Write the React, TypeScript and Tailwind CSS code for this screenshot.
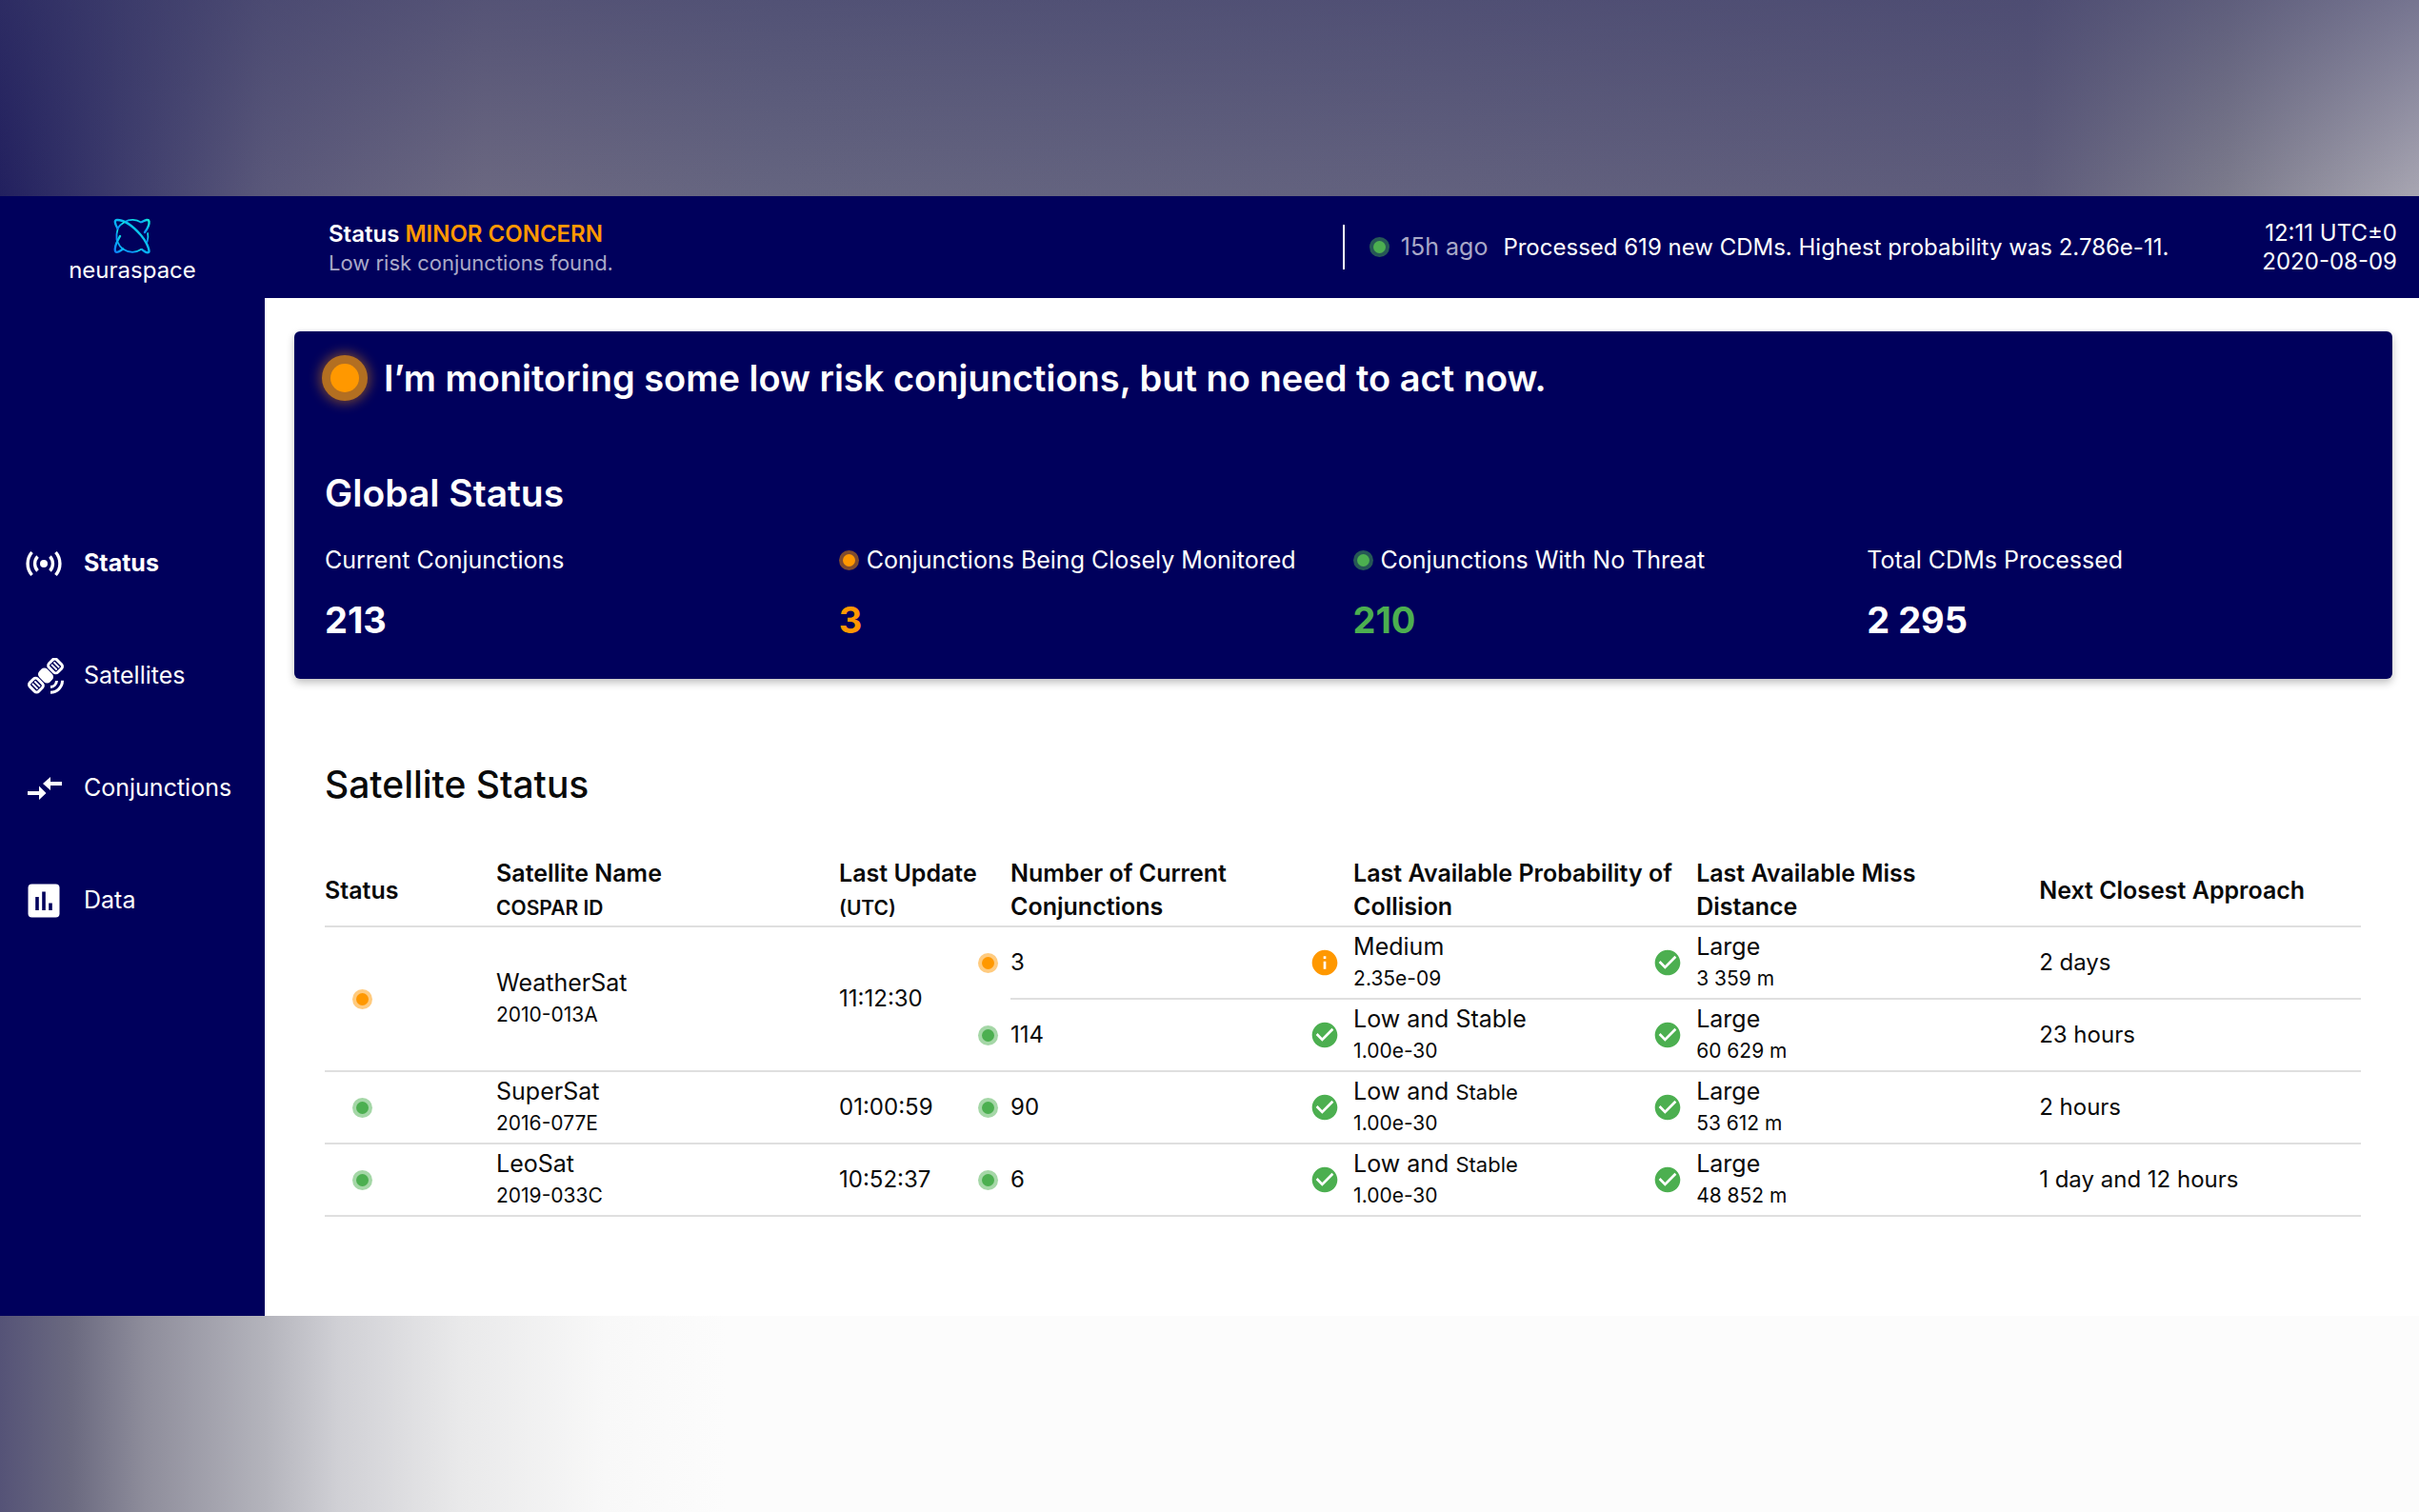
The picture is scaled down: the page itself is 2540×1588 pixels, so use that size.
import React from "react";

type Tone = "amber" | "green";

const DOT = {
  amber: "bg-[#ff9800] ring-[#ff9800]/50",
  green: "bg-[#4caf50] ring-[#4caf50]/50",
};

function Dot({ tone }: { tone: Tone }) {
  return <span className={"m-1 inline-block size-[13px] shrink-0 rounded-full ring-4 " + DOT[tone]} />;
}

function Check() {
  return (
    <svg viewBox="0 0 24 24" className="mr-3 size-8 shrink-0" aria-hidden="true">
      <path
        fill="#4caf50"
        d="M12 2C6.48 2 2 6.48 2 12s4.48 10 10 10 10-4.48 10-10S17.52 2 12 2zm-2 15-5-5 1.41-1.41L10 14.17l7.59-7.59L19 8l-9 9z"
      />
    </svg>
  );
}

function Info() {
  return (
    <svg viewBox="0 0 24 24" className="mr-3 size-8 shrink-0" aria-hidden="true">
      <path
        fill="#ff9800"
        d="M12 2C6.48 2 2 6.48 2 12s4.48 10 10 10 10-4.48 10-10S17.52 2 12 2zm1 15h-2v-6h2v6zm0-8h-2V7h2v2z"
      />
    </svg>
  );
}

function Logo() {
  return (
    <svg viewBox="0 0 40 38" className="h-[38px] w-10" fill="none" strokeWidth="2.4" strokeLinecap="round" aria-hidden="true">
      <defs>
        <linearGradient id="orbit" x1="0" y1="1" x2="1" y2="0">
          <stop offset="0" stopColor="#0f7bff" />
          <stop offset="0.5" stopColor="#08b4f5" />
          <stop offset="1" stopColor="#10f0d8" />
        </linearGradient>
      </defs>
      <g stroke="url(#orbit)">
        <path d="M12 4C17 1.200 24 1.200 29 4.500" strokeWidth="1.800" />
        <path d="M36 16C37 20 36.500 22 35.500 25" strokeWidth="1.800" />
        <path d="M29 33C23 37 16 36.500 10 32.500" strokeWidth="1.800" />
        <path d="M3.500 23C2.800 18 3.500 15 4.500 12" strokeWidth="1.800" />
        <path d="M4.500 11C1 5 1 2 4 2C12 2 22 10 29 18C35 25 39 35 37 36C35.500 37 32 35 30 33" />
        <path d="M30 4C34 2 37 1 37.500 3.500C38 7 36 11 33 15" />
        <path d="M7 19C3 26 0.500 33 2.500 35.500C4 37 8 34 10 32.500" />
        <path d="M4.500 11C6 8 8 6.500 11 4.800" strokeWidth="1.800" />
        <path d="M5 26C6 29 8 31 10 32.500" strokeWidth="1.800" />
      </g>
    </svg>
  );
}

function BroadcastIcon() {
  return (
    <svg viewBox="0 0 38 28" className="h-7 w-[38px]" fill="none" stroke="currentColor" strokeWidth="3.400" aria-hidden="true">
      <circle cx="19" cy="14" r="4" fill="currentColor" stroke="none" />
      <path d="M12.500 6.500a11 11 0 0 0 0 15M25.500 6.500a11 11 0 0 1 0 15M6.500 2a18.500 18.500 0 0 0 0 24M31.500 2a18.500 18.500 0 0 1 0 24" />
    </svg>
  );
}

function SatelliteIcon() {
  return (
    <svg viewBox="0 0 38 38" className="ml-0.5 size-[38px]" fill="none" stroke="currentColor" aria-hidden="true">
      <g transform="rotate(-45 19 18.500)">
        <rect x="-1" y="12" width="11.500" height="13" rx="3" strokeWidth="3" />
        <path d="M3 14.500v8M6.500 14.500v8" strokeWidth="1.800" />
        <rect x="13" y="10.500" width="12" height="16" rx="4.500" fill="currentColor" stroke="none" />
        <rect x="27.500" y="12" width="11.500" height="13" rx="3" strokeWidth="3" />
        <path d="M31.500 14.500v8M35 14.500v8" strokeWidth="1.800" />
      </g>
      <path d="M24 30.500a7 7 0 0 0 6.500-6.500M24 36.300a12.500 12.500 0 0 0 12.500-12.500" strokeWidth="3" />
    </svg>
  );
}

function ArrowsIcon() {
  return (
    <svg viewBox="0 0 36 24" className="ml-0.5 h-6 w-9" fill="currentColor" aria-hidden="true">
      <path d="M0 15h12v-5.500l7.500 7.500-7.500 7V19H0zM36 5H24V0l-8 7 8 7V9h12z" />
    </svg>
  );
}

function ChartIcon() {
  return (
    <svg viewBox="0 0 34 36" className="ml-0.5 h-9 w-[34px]" aria-hidden="true">
      <rect x="0.500" y="0.500" width="33" height="35" rx="4" fill="currentColor" />
      <path d="M10 14v14M17 8.500v19.500M24 20.500v7.500" stroke="#00005c" strokeWidth="3.600" />
    </svg>
  );
}

const NAV = [
  { label: "Status", icon: <BroadcastIcon />, active: true },
  { label: "Satellites", icon: <SatelliteIcon />, active: false },
  { label: "Conjunctions", icon: <ArrowsIcon />, active: false },
  { label: "Data", icon: <ChartIcon />, active: false },
];

const STATS: { label: string; value: string; tone?: Tone }[] = [
  { label: "Current Conjunctions", value: "213" },
  { label: "Conjunctions Being Closely Monitored", value: "3", tone: "amber" },
  { label: "Conjunctions With No Threat", value: "210", tone: "green" },
  { label: "Total CDMs Processed", value: "2 295" },
];

const VALUE = { amber: "text-[#ff9800]", green: "text-[#4caf50]" };

type Conj = { tone: Tone; count: string; risk: React.ReactNode; prob: string; miss: string; next: string };

const lowStable = <>Low and <span className="text-[22px]">Stable</span></>;

const SATS: { name: string; id: string; time: string; tone: Tone; rows: Conj[] }[] = [
  {
    name: "WeatherSat",
    id: "2010-013A",
    time: "11:12:30",
    tone: "amber",
    rows: [
      { tone: "amber", count: "3", risk: "Medium", prob: "2.35e-09", miss: "3 359 m", next: "2 days" },
      { tone: "green", count: "114", risk: "Low and Stable", prob: "1.00e-30", miss: "60 629 m", next: "23 hours" },
    ],
  },
  {
    name: "SuperSat",
    id: "2016-077E",
    time: "01:00:59",
    tone: "green",
    rows: [{ tone: "green", count: "90", risk: lowStable, prob: "1.00e-30", miss: "53 612 m", next: "2 hours" }],
  },
  {
    name: "LeoSat",
    id: "2019-033C",
    time: "10:52:37",
    tone: "green",
    rows: [{ tone: "green", count: "6", risk: lowStable, prob: "1.00e-30", miss: "48 852 m", next: "1 day and 12 hours" }],
  },
];

function TwoLine({ top, bottom }: { top: React.ReactNode; bottom: string }) {
  return (
    <div>
      <div className="h-[34px] text-[25px] leading-[34px]">{top}</div>
      <div className="text-[21px] leading-[34px]">{bottom}</div>
    </div>
  );
}

function Marked({ mark, children }: { mark: React.ReactNode; children: React.ReactNode }) {
  return (
    <div className="-ml-12 flex items-center">
      <span className="flex w-12 shrink-0 items-center justify-center">{mark}</span>
      {children}
    </div>
  );
}

export default function App() {
  return (
    <div className="flex min-h-screen flex-col bg-white font-['Inter',sans-serif] text-[24px] text-[#0a0a0a]">
      <div className="h-[206px] bg-[linear-gradient(90deg,#22205f_0%,#3c3b6c_5%,#5a587a_11%,#6b6881_20%,#656580_32%,#62617e_60%,#5e5c7b_84%,#7c7b8c_92%,#a8a6b2_100%)]">
        <div className="h-full bg-linear-to-b from-[#3a3a68]/45 to-transparent" />
      </div>

      <div className="flex bg-[#00005c] text-white">
        <aside className="flex w-[278px] shrink-0 flex-col">
          <div className="flex h-[107px] flex-col items-center pt-[23px]">
            <Logo />
            <span className="text-[24px] leading-[34px]">neuraspace</span>
          </div>
          <nav className="flex flex-col gap-[58px] pt-[249px] text-[25px]">
            {NAV.map((n) => (
              <a key={n.label} href="#" className={"flex h-[60px] items-center " + (n.active ? "font-bold" : "")}>
                <span className="flex w-[88px] shrink-0 items-center pl-[27px]">{n.icon}</span>
                {n.label}
              </a>
            ))}
          </nav>
        </aside>

        <div className="min-w-0 flex-1">
          <header className="flex h-[107px] items-center pr-[23px] pl-[67px]">
            <div className="flex-1">
              <div className="mt-0.5 text-[24px] leading-[31px] font-semibold">
                Status <span className="text-[#ff9800]">MINOR CONCERN</span>
              </div>
              <div className="text-[22px] leading-[31px] text-[#a9a9c8]">Low risk conjunctions found.</div>
            </div>
            <div className="flex h-[47px] items-center border-l-2 border-white pl-[26px]">
              <Dot tone="green" />
              <span className="ml-3 text-[25px] text-[#a9a9c8]">15h ago</span>
              <span className="ml-4">Processed 619 new CDMs. Highest probability was 2.786e-11.</span>
            </div>
            <div className="ml-[98px] text-right leading-[30px]">
              <div>12:11 UTC±0</div>
              <div>2020-08-09</div>
            </div>
          </header>

          <main className="h-[1069px] bg-white pt-[35px] pr-7 pl-[31px] text-[#0a0a0a]">
            <section className="h-[365px] rounded-md bg-[#00005c] pt-[22px] pr-3 pl-8 text-white shadow-[0_4px_8px_rgba(0,0,0,0.25)]">
              <div className="flex h-[54px] items-center gap-[22px]">
                <span className="ml-1.5 size-[30px] shrink-0 rounded-full bg-[#ff9800] shadow-[0_0_0_9px_#b36f21,0_0_12px_12px_#ff980066]" />
                <h1 className="ml-1 text-[38px] leading-[50px] font-semibold">
                  I’m monitoring some low risk conjunctions, but no need to act now.
                </h1>
              </div>
              <h2 className="mt-[69px] text-[39px] leading-[50px] font-semibold">Global Status</h2>
              <dl className="mt-[27px] grid grid-cols-4">
                {STATS.map((s) => (
                  <div key={s.label}>
                    <dt className="flex items-center gap-2 text-[25px] leading-9 whitespace-nowrap">
                      {s.tone && <Dot tone={s.tone} />}
                      {s.label}
                    </dt>
                    <dd className={"mt-4 text-[38px] leading-[58px] font-bold " + (s.tone ? VALUE[s.tone] : "")}>{s.value}</dd>
                  </div>
                ))}
              </dl>
            </section>

            <section className="pt-[85px] pr-[33px] pl-8">
              <h2 className="text-[39px] leading-[52px] font-medium">Satellite Status</h2>
              <table className="mt-10 w-full table-fixed border-collapse text-left">
                <colgroup>
                  <col className="w-[8.42%]" />
                  <col className="w-[16.84%]" />
                  <col className="w-[8.42%]" />
                  <col className="w-[16.84%]" />
                  <col className="w-[16.84%]" />
                  <col className="w-[16.84%]" />
                  <col />
                </colgroup>
                <thead>
                  <tr className="h-[83px] border-b-2 border-[#dfdfdf] text-[25px] leading-[35px] whitespace-nowrap">
                    <th scope="col" className="pt-2 font-semibold">Status</th>
                    <th scope="col" className="pt-2 font-semibold">Satellite Name<br /><span className="text-[21px]">COSPAR ID</span></th>
                    <th scope="col" className="pt-2 font-semibold">Last Update<br /><span className="text-[21px]">(UTC)</span></th>
                    <th scope="col" className="pt-2 font-semibold">Number of Current<br />Conjunctions</th>
                    <th scope="col" className="pt-2 font-semibold">Last Available Probability of<br />Collision</th>
                    <th scope="col" className="pt-2 font-semibold">Last Available Miss<br />Distance</th>
                    <th scope="col" className="pt-2 font-semibold">Next Closest Approach</th>
                  </tr>
                </thead>
                <tbody>
                  {SATS.map((s) =>
                    s.rows.map((r, i) => (
                      <tr key={s.id + r.count} className="h-[76px]">
                        {i === 0 && (
                          <>
                            <td rowSpan={s.rows.length} className="border-b-2 border-[#dfdfdf] pl-[29px]">
                              <span className="flex"><Dot tone={s.tone} /></span>
                            </td>
                            <td rowSpan={s.rows.length} className="border-b-2 border-[#dfdfdf]">
                              <TwoLine top={s.name} bottom={s.id} />
                            </td>
                            <td rowSpan={s.rows.length} className="border-b-2 border-[#dfdfdf]">{s.time}</td>
                          </>
                        )}
                        <td className="border-b-2 border-[#dfdfdf]">
                          <Marked mark={<Dot tone={r.tone} />}>{r.count}</Marked>
                        </td>
                        <td className="border-b-2 border-[#dfdfdf]">
                          <Marked mark={r.tone === "amber" ? <Info /> : <Check />}>
                            <TwoLine top={r.risk} bottom={r.prob} />
                          </Marked>
                        </td>
                        <td className="border-b-2 border-[#dfdfdf]">
                          <Marked mark={<Check />}>
                            <TwoLine top="Large" bottom={r.miss} />
                          </Marked>
                        </td>
                        <td className="border-b-2 border-[#dfdfdf]">{r.next}</td>
                      </tr>
                    )),
                  )}
                </tbody>
              </table>
            </section>
          </main>
        </div>
      </div>

      <div className="flex-1 bg-[linear-gradient(90deg,#555377_0%,#6b6a80_3%,#8e8d9b_6%,#b4b4bc_11%,#d0d0d5_14%,#e9e9ea_19%,#f8f8f8_25%,#fcfcfc_30%,#fcfcfc_100%)]" />
    </div>
  );
}
